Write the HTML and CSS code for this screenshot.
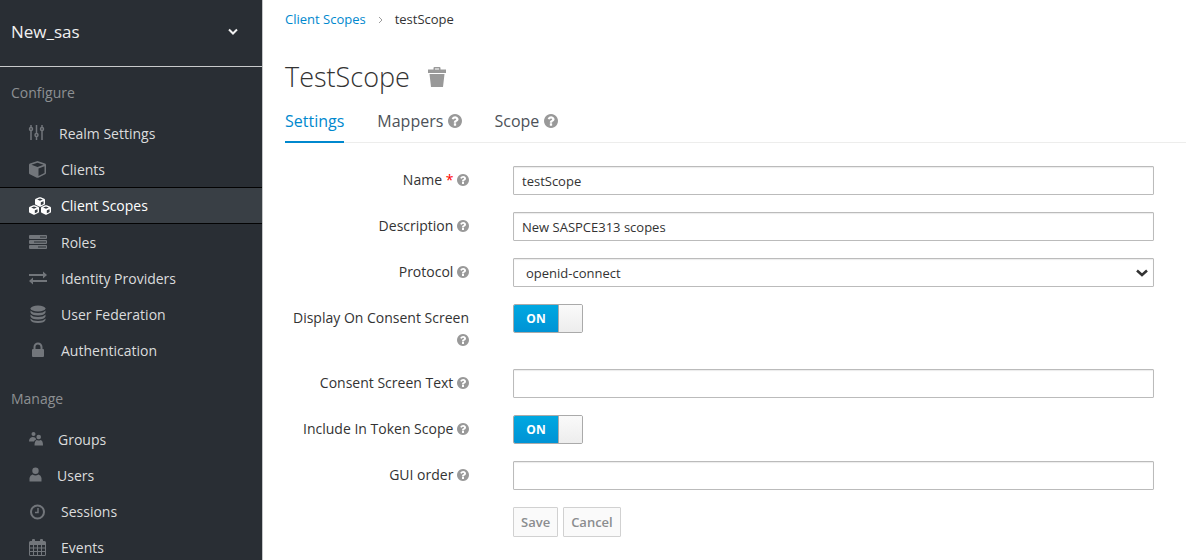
FILE: index.html
```
<!DOCTYPE html>
<html lang="en">
<head>
  <meta charset="UTF-8" />
  <meta name="viewport" content="width=device-width, initial-scale=1.0">
  <title>TestScope</title>
  <link rel="stylesheet" href="styles.css">
</head>
<body>

  <svg class="sprite" aria-hidden="true">
    <symbol id="help" viewBox="0 128 1536 1536">
      <path d="M896 1376v-192q0-14-9-23t-23-9h-192q-14 0-23 9t-9 23v192q0 14 9 23t23 9h192q14 0 23-9t9-23zm256-672q0-88-55.5-163t-138.5-116-170-41q-243 0-371 213-15 24 8 42l132 100q7 6 19 6 16 0 25-12 53-68 86-92 34-24 86-24 48 0 85.5 26t37.5 59q0 38-20 61t-68 45q-63 28-115.5 86.5t-52.5 125.5v36q0 14 9 23t23 9h192q14 0 23-9t9-23q0-19 21.5-49.5t54.5-49.5q32-18 49-28.5t46-35 44.5-48 28-60.5 12.5-81zm384 192q0 209-103 385.5t-279.5 279.5-385.5 103-385.5-103-279.5-279.5-103-385.5 103-385.5 279.5-279.5 385.5-103 385.5 103 279.5 279.5 103 385.5z"/>
    </symbol>
    <symbol id="cube" viewBox="0 0 12 11">
      <path d="M5.2.3q.8-.3 1.6 0l3.900 1.500q.8.400.8 1.200v4.300q0 .8-.7 1.200L7 10.500q-1 .5-2 0L1.200 8.500Q.5 8.100.5 7.300V3q0-.8.8-1.200zM2.900 2.800 6 4.100l3.100-1.300L6 1.600zM6.900 9.200l3-1.500V4.600l-3 1.200z" fill-rule="evenodd"/>
    </symbol>
  </svg>

  <aside class="sidebar">
    <button type="button" class="realm">
      New_sas
      <svg class="realm-arrow" viewBox="0 0 12 8"><path d="M2 1.5 6 5.5 10 1.5"/></svg>
    </button>

    <nav>
      <h2 class="nav-title">Configure</h2>
      <ul class="nav-list">
        <li><a href="#">
          <svg class="icon icon-sliders" viewBox="0 0 18 18">
            <path class="line" d="M2 1v2M2 7v9M7.500 1v8M7.500 13v3M13 1v2M13 7v9"/>
            <circle class="line" cx="2" cy="5" r="1.500"/>
            <circle class="line" cx="7.500" cy="11" r="1.500"/>
            <circle class="line" cx="13" cy="5" r="1.500"/>
          </svg>Realm Settings</a></li>
        <li><a href="#">
          <svg class="icon" viewBox="0 0 20 18">
            <path d="M7.800 1.200q.7-.3 1.400 0L16 3.600q1 .4 1 1.400v8q0 .8-.8 1.200l-7 3.500q-.7.300-1.400 0l-7-3.500Q0 13.800 0 13V5q0-1 1-1.400zM8.500 2.700 2.400 4.700 8.500 7l6.100-2.300zM9.500 15.900l6-3V6.200l-6 2.200z" fill-rule="evenodd"/>
          </svg>Clients</a></li>
        <li class="active"><a href="#">
          <svg class="icon" viewBox="0 0 20 18">
            <use href="#cube" x="5" y="0" width="12" height="10"/>
            <use href="#cube" x="-1" y="8" width="12" height="10"/>
            <use href="#cube" x="11" y="8" width="12" height="10"/>
          </svg>Client Scopes</a></li>
        <li><a href="#">
          <svg class="icon" viewBox="0 0 20 18">
            <path d="M1 2h16q1 0 1 1v2q0 1-1 1H1Q0 6 0 5V3q0-1 1-1zM1 7h16q1 0 1 1v2q0 1-1 1H1q-1 0-1-1V8q0-1 1-1zM1 12h16q1 0 1 1v2q0 1-1 1H1q-1 0-1-1v-2q0-1 1-1zM11 3.5v1h6v-1zM5 8.500v1h12v-1zM9 13.500v1h8v-1z" fill-rule="evenodd"/>
          </svg>Roles</a></li>
        <li><a href="#">
          <svg class="icon" viewBox="0 0 20 18">
            <path d="M0 5h14V2.500L18 6l-4 3.500V7H0zM18 11H4V8.500L0 12l4 3.500V13h14z"/>
          </svg>Identity Providers</a></li>
        <li><a href="#">
          <svg class="icon" viewBox="0 0 20 18">
            <ellipse cx="9" cy="3.500" rx="7.500" ry="3"/>
            <path d="M1.500 5.500Q3.500 8 9 8t7.500-2.500v2Q15.500 10.500 9 10.500T1.500 7.500zM1.500 9.500Q3.500 12 9 12t7.500-2.500v2Q15.500 14.500 9 14.500t-7.500-3zM1.500 13.500Q3.500 16 9 16t7.500-2.500V15Q15.500 18 9 18t-7.500-3z"/>
          </svg>User Federation</a></li>
        <li><a href="#">
          <svg class="icon" viewBox="0 0 20 18">
            <path d="M4.500 8V6a4.500 4.500 0 0 1 9 0v2h.5q1 0 1 1v6q0 1-1 1H4q-1 0-1-1V9q0-1 1-1zM6.500 8h5V6a2.500 2.500 0 0 0-5 0z" fill-rule="evenodd"/>
          </svg>Authentication</a></li>
      </ul>

      <h2 class="nav-title">Manage</h2>
      <ul class="nav-list">
        <li><a href="#">
          <svg class="icon icon-groups" viewBox="0 0 17 18">
            <circle cx="4.500" cy="4" r="2"/>
            <circle cx="9.700" cy="7" r="2.300"/>
            <path d="M0 11.500Q0 7.500 3.500 7q2 0 3 1l.7 1.500Q5.500 10 5 11.500zM5.500 15.500Q5.500 10.500 8 10q1.700 1 3.500 0 2.500.2 2.500 5.500z"/>
          </svg>Groups</a></li>
        <li><a href="#">
          <svg class="icon icon-user" viewBox="0 0 16 18">
            <circle cx="6.500" cy="4.700" r="3.200"/>
            <path d="M.5 15.500V12Q1 9 3.500 8.500q3 1.800 6 0Q12 9 12.500 12v3.500z"/>
          </svg>Users</a></li>
        <li><a href="#">
          <svg class="icon" viewBox="0 0 20 18">
            <circle class="ring" cx="8.500" cy="10" r="6.500"/>
            <path class="line" d="M9 6v4.500H6"/>
          </svg>Sessions</a></li>
        <li><a href="#">
          <svg class="icon" viewBox="0 0 20 18">
            <path d="M0 4.500Q0 3 1.500 3H3V2q0-1 1-1h1q1 0 1 1v1h5V2q0-1 1-1h1q1 0 1 1v1h1.500Q17 3 17 4.500v12q0 1.500-1.500 1.500h-14Q0 18 0 16.500zM1 7v2.500h3V7zM5 7v2.500h3V7zM9 7v2.500h3V7zM13 7v2.500h3V7zM1 10.500V13h3v-2.500zM5 10.500V13h3v-2.500zM9 10.500V13h3v-2.500zM13 10.500V13h3v-2.500zM1 14v3h3v-3zM5 14v3h3v-3zM9 14v3h3v-3zM13 14v3h3v-3z" fill-rule="evenodd"/>
          </svg>Events</a></li>
      </ul>
    </nav>
  </aside>

  <main class="content">
    <ol class="breadcrumb">
      <li><a href="#">Client Scopes</a></li>
      <li><svg class="crumb-arrow" viewBox="0 0 5 8"><path d="M1 1l3 3-3 3"/></svg>testScope</li>
    </ol>

    <div class="page-title">
      <h1>TestScope</h1>
      <button type="button" class="trash" aria-label="Delete">
        <svg viewBox="0 0 18 20"><path d="M0 2.500h5.500V1q0-1 1-1h5q1 0 1 1v1.500H18V6H0zM7 2.500h4v-1H7zM1.500 7h15L15 20H3z" fill-rule="evenodd"/></svg>
      </button>
    </div>

    <ul class="tabs">
      <li class="active"><a href="#">Settings</a></li>
      <li><a href="#">Mappers <svg class="help"><use href="#help"/></svg></a></li>
      <li><a href="#">Scope <svg class="help"><use href="#help"/></svg></a></li>
    </ul>

    <form class="scope-form">
      <div class="form-row">
        <label for="name">Name <span class="required">*</span> <svg class="help"><use href="#help"/></svg></label>
        <input type="text" id="name" value="testScope" />
      </div>

      <div class="form-row">
        <label for="description">Description <svg class="help"><use href="#help"/></svg></label>
        <input type="text" id="description" value="New SASPCE313 scopes" />
      </div>

      <div class="form-row">
        <label for="protocol">Protocol <svg class="help"><use href="#help"/></svg></label>
        <div class="select-wrap">
          <select id="protocol">
            <option>openid-connect</option>
            <option>saml</option>
          </select>
          <svg class="select-arrow" viewBox="0 0 12 8"><path d="M1 1.500 6 6 11 1.500"/></svg>
        </div>
      </div>

      <div class="form-row">
        <label for="consent">Display On Consent Screen <svg class="help"><use href="#help"/></svg></label>
        <div class="switch">
          <input type="checkbox" id="consent" checked />
          <span class="switch-on">ON</span>
          <span class="switch-handle"></span>
        </div>
      </div>

      <div class="form-row">
        <label for="consent-text">Consent Screen Text <svg class="help"><use href="#help"/></svg></label>
        <input type="text" id="consent-text" />
      </div>

      <div class="form-row">
        <label for="token-scope">Include In Token Scope <svg class="help"><use href="#help"/></svg></label>
        <div class="switch">
          <input type="checkbox" id="token-scope" checked />
          <span class="switch-on">ON</span>
          <span class="switch-handle"></span>
        </div>
      </div>

      <div class="form-row">
        <label for="gui-order">GUI order <svg class="help"><use href="#help"/></svg></label>
        <input type="text" id="gui-order" />
      </div>

      <div class="form-row">
        <div class="buttons">
          <button type="submit" class="btn" disabled>Save</button>
          <button type="button" class="btn" disabled>Cancel</button>
        </div>
      </div>
    </form>
  </main>

</body>
</html>
```
FILE: styles.css
```
* {
  box-sizing: border-box;
}

body {
  margin: 0;
  display: flex;
  height: 100vh;
  overflow: hidden;
  font-family: "Open Sans", sans-serif;
  font-size: 13px;
  color: #333;
  background: #fff;
}

h1, h2, ul, ol {
  margin: 0;
  padding: 0;
  font-weight: 400;
}

ul, ol {
  list-style: none;
}

a {
  text-decoration: none;
}

.sprite {
  display: none;
}

/* sidebar */
.sidebar {
  flex: 0 0 263px;
  background: #292e34;
  border-right: 1px solid #c4c6c8;
  overflow: hidden;
}

.realm {
  display: flex;
  align-items: center;
  justify-content: space-between;
  width: 100%;
  height: 67px;
  padding: 0 23px 3px 11px;
  background: none;
  border: none;
  border-bottom: 1px solid #c8cacb;
  color: #f1f1f1;
  font-family: inherit;
  font-size: 17px;
}

.realm-arrow {
  width: 12px;
  height: 8px;
  fill: none;
  stroke: #f1f1f1;
  stroke-width: 2;
}

.nav-title {
  padding: 16px 11px 12px;
  font-size: 14px;
  line-height: 20px;
  color: #8d9093;
}

.nav-list {
  padding-bottom: 5px;
}

.nav-list a {
  display: flex;
  align-items: center;
  gap: 12px;
  height: 36px;
  padding-left: 29px;
  font-size: 14px;
  font-weight: 500;
  color: #dbdcdd;
}

.nav-list .active {
  background: #393f45;
  border-top: 1px solid #030303;
  border-bottom: 1px solid #030303;
}

.nav-list .active a {
  height: 35px;
  color: #fff;
}

.icon {
  flex: none;
  width: 20px;
  height: 18px;
  overflow: visible;
  fill: #72767b;
}

.icon-sliders {
  width: 18px;
}

.icon-groups {
  width: 17px;
}

.icon-user {
  width: 16px;
}

.active .icon {
  fill: #fff;
}

.icon .line,
.icon .ring {
  fill: none;
  stroke: #72767b;
  stroke-width: 1.5;
}

.icon .ring {
  stroke-width: 2;
}

/* content */
.content {
  flex: 1;
  min-width: 0;
  padding-left: 22px;
}

.breadcrumb {
  display: flex;
  padding-top: 9px;
  line-height: 20px;
}

.breadcrumb a {
  color: #0088ce;
}

.crumb-arrow {
  width: 5px;
  height: 8px;
  margin: 0 12px;
  fill: none;
  stroke: #9c9c9c;
}

.page-title {
  display: flex;
  align-items: center;
  gap: 18px;
  margin-top: 29px;
}

.page-title h1 {
  font-size: 27px;
  font-weight: 300;
  line-height: 38px;
}

.trash {
  padding: 0;
  border: none;
  background: none;
}

.trash svg {
  display: block;
  width: 18px;
  height: 20px;
  fill: #999;
}

.tabs {
  display: flex;
  gap: 33px;
  margin-top: 10px;
  border-bottom: 1px solid #ededec;
}

.tabs a {
  display: block;
  height: 35px;
  font-size: 16px;
  line-height: 30px;
  color: #4d5258;
}

.tabs .active {
  margin-bottom: -1px;
  border-bottom: 2px solid #0088ce;
}

.tabs .active a {
  color: #0088ce;
}

.help {
  width: 12px;
  height: 12px;
  vertical-align: -1px;
  fill: #999;
}

.tabs .help {
  width: 14px;
  height: 14px;
}

/* form */
.scope-form {
  padding: 23px 32px 0 0;
}

.form-row {
  display: grid;
  grid-template-columns: 184px 1fr;
  column-gap: 44px;
  align-items: start;
  margin-bottom: 17px;
}

.form-row label {
  padding: 3px 0 1px;
  font-size: 14px;
  font-weight: 500;
  line-height: 22px;
  text-align: right;
}

.required {
  color: #f00;
}

.form-row input[type="text"],
.form-row select {
  display: block;
  width: 100%;
  height: 29px;
  padding: 1px 8px 0;
  border: 1px solid #bbb;
  border-radius: 1px;
  background: #fff;
  box-shadow: inset 0 1px 1px rgba(3, 3, 3, 0.08);
  color: #333;
  font-family: inherit;
  font-size: 13px;
}

.select-wrap {
  position: relative;
}

.form-row select {
  appearance: none;
  padding-left: 12px;
}

.select-arrow {
  position: absolute;
  top: 11px;
  right: 6px;
  width: 12px;
  height: 8px;
  fill: none;
  stroke: #333;
  stroke-width: 2.5;
  pointer-events: none;
}

.switch {
  position: relative;
  display: flex;
  width: 70px;
  height: 29px;
  border: 1px solid #aaa;
  border-radius: 2px;
  overflow: hidden;
}

.switch input {
  position: absolute;
  inset: 0;
  width: 100%;
  height: 100%;
  margin: 0;
  opacity: 0;
}

.switch-on {
  flex: 1;
  background: linear-gradient(#00a8e1, #0093d5);
  color: #fff;
  font-size: 12px;
  font-weight: 700;
  line-height: 27px;
  text-align: center;
}

.switch-handle {
  width: 24px;
  border-left: 1px solid #aaa;
  background: linear-gradient(#fafafa, #ededed);
}

.buttons {
  display: flex;
  grid-column: 2;
  gap: 5px;
}

.btn {
  height: 30px;
  padding: 0 7px;
  border: 1px solid #d1d1d1;
  border-radius: 1px;
  background: #fafafa;
  color: #8b8d8f;
  font-family: inherit;
  font-size: 13px;
  font-weight: 600;
}
```
